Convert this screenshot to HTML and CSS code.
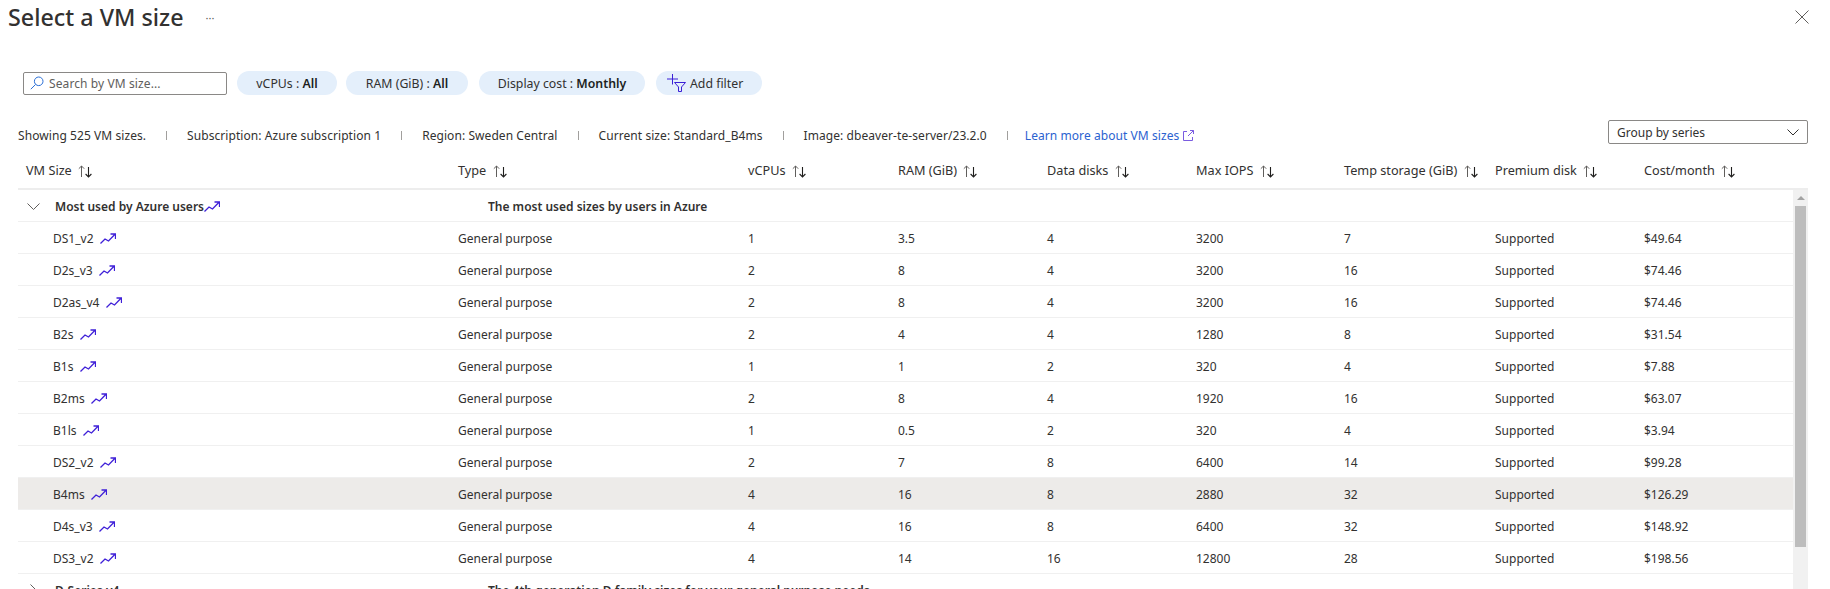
FILE: index.html
```html
<!DOCTYPE html>
<html lang="en">
<head>
    <meta charset="UTF-8">
    <title>Select a VM size</title>
    <link rel="stylesheet" href="styles.css">
</head>
<body>
    <svg class="defs" width="0" height="0">
        <symbol id="trend" viewBox="0 0 16 11">
            <path d="M0.5 10.5 L5 6 L8.5 8 L15 1.3 M10.5 1 H15.5 V6" fill="none" stroke="currentColor" stroke-width="1.3"/>
        </symbol>
        <symbol id="sort" viewBox="0 0 15 13">
            <path d="M3.5 12 V1 M0.8 3.7 L3.5 1 L6.2 3.7" fill="none" stroke="#605e5c" stroke-width="1"/>
            <path d="M10.5 2 V12 M7.6 9 L10.5 12 L13.4 9" fill="none" stroke="#201f1e" stroke-width="1.1"/>
        </symbol>
    </svg>

    <header class="title-bar">
        <h1>Select a VM size</h1>
        <span class="more">···</span>
        <svg class="close" width="14" height="14" viewBox="0 0 14 14"><path d="M0.5 0.5 L13.5 13.5 M13.5 0.5 L0.5 13.5" stroke="#605e5c" fill="none"/></svg>
    </header>

    <div class="toolbar">
        <div class="search">
            <svg width="14" height="14" viewBox="0 0 14 14"><circle cx="8.7" cy="5.3" r="4.3" fill="none" stroke="#2b6fd6"/><path d="M5.6 8.4 L0.8 13.2" stroke="#2b6fd6" fill="none"/></svg>
            <span>Search by VM size...</span>
        </div>
        <div class="pill pill-cpu"><span>vCPUs : <b>All</b></span></div>
        <div class="pill pill-ram"><span>RAM (GiB) : <b>All</b></span></div>
        <div class="pill pill-cost"><span>Display cost : <b>Monthly</b></span></div>
        <div class="pill pill-add">
            <svg width="19" height="18" viewBox="0 0 19 18"><path d="M0 5 H11 M5.5 0 V10.5" fill="none" stroke="#3a1fd6"/><path d="M7.5 8.5 H18.5 L14.5 13 V17.5 H11.5 V13 Z" fill="none" stroke="#3a1fd6"/></svg>
            <span>Add filter</span>
        </div>
    </div>

    <div class="info-row">
        <div class="info">
            <span>Showing 525 VM sizes.</span><i></i>
            <span>Subscription: Azure subscription 1</span><i></i>
            <span>Region: Sweden Central</span><i></i>
            <span>Current size: Standard_B4ms</span><i></i>
            <span>Image: dbeaver-te-server/23.2.0</span><i></i>
            <a href="#">Learn more about VM sizes
                <svg class="ext" width="11" height="11" viewBox="0 0 11 11"><path d="M4 1.5 H0.5 V10.5 H9.5 V7 M5 6 L10.5 0.5 M7 0.5 H10.5 V4" fill="none" stroke="#7a5ce0"/></svg>
            </a>
        </div>
        <div class="group-select">
            <span>Group by series</span>
            <svg width="12" height="7" viewBox="0 0 12 7"><path d="M0.5 0.5 L6 6 L11.5 0.5" fill="none" stroke="#323130"/></svg>
        </div>
    </div>

    <div class="row head">
        <div>VM Size <svg class="sort"><use href="#sort"/></svg></div>
        <div>Type <svg class="sort"><use href="#sort"/></svg></div>
        <div>vCPUs <svg class="sort"><use href="#sort"/></svg></div>
        <div>RAM (GiB) <svg class="sort"><use href="#sort"/></svg></div>
        <div>Data disks <svg class="sort"><use href="#sort"/></svg></div>
        <div>Max IOPS <svg class="sort"><use href="#sort"/></svg></div>
        <div>Temp storage (GiB) <svg class="sort"><use href="#sort"/></svg></div>
        <div>Premium disk <svg class="sort"><use href="#sort"/></svg></div>
        <div>Cost/month <svg class="sort"><use href="#sort"/></svg></div>
    </div>

    <div class="table-body">
        <div class="rows">
            <div class="group">
                <svg class="chev" width="13" height="13" viewBox="0 0 13 13"><path d="M0.5 3.5 L6.5 9.5 L12.5 3.5" fill="none" stroke="#605e5c"/></svg>
                <span class="group-name">Most used by Azure users<svg class="trend tight"><use href="#trend"/></svg></span>
                <span class="group-desc">The most used sizes by users in Azure</span>
            </div>

            <div class="row"><div class="vm">DS1_v2 <svg class="trend"><use href="#trend"/></svg></div><div>General purpose</div><div>1</div><div>3.5</div><div>4</div><div>3200</div><div>7</div><div>Supported</div><div>$49.64</div></div>
            <div class="row"><div class="vm">D2s_v3 <svg class="trend"><use href="#trend"/></svg></div><div>General purpose</div><div>2</div><div>8</div><div>4</div><div>3200</div><div>16</div><div>Supported</div><div>$74.46</div></div>
            <div class="row"><div class="vm">D2as_v4 <svg class="trend"><use href="#trend"/></svg></div><div>General purpose</div><div>2</div><div>8</div><div>4</div><div>3200</div><div>16</div><div>Supported</div><div>$74.46</div></div>
            <div class="row"><div class="vm">B2s <svg class="trend"><use href="#trend"/></svg></div><div>General purpose</div><div>2</div><div>4</div><div>4</div><div>1280</div><div>8</div><div>Supported</div><div>$31.54</div></div>
            <div class="row"><div class="vm">B1s <svg class="trend"><use href="#trend"/></svg></div><div>General purpose</div><div>1</div><div>1</div><div>2</div><div>320</div><div>4</div><div>Supported</div><div>$7.88</div></div>
            <div class="row"><div class="vm">B2ms <svg class="trend"><use href="#trend"/></svg></div><div>General purpose</div><div>2</div><div>8</div><div>4</div><div>1920</div><div>16</div><div>Supported</div><div>$63.07</div></div>
            <div class="row"><div class="vm">B1ls <svg class="trend"><use href="#trend"/></svg></div><div>General purpose</div><div>1</div><div>0.5</div><div>2</div><div>320</div><div>4</div><div>Supported</div><div>$3.94</div></div>
            <div class="row"><div class="vm">DS2_v2 <svg class="trend"><use href="#trend"/></svg></div><div>General purpose</div><div>2</div><div>7</div><div>8</div><div>6400</div><div>14</div><div>Supported</div><div>$99.28</div></div>
            <div class="row selected"><div class="vm">B4ms <svg class="trend"><use href="#trend"/></svg></div><div>General purpose</div><div>4</div><div>16</div><div>8</div><div>2880</div><div>32</div><div>Supported</div><div>$126.29</div></div>
            <div class="row"><div class="vm">D4s_v3 <svg class="trend"><use href="#trend"/></svg></div><div>General purpose</div><div>4</div><div>16</div><div>8</div><div>6400</div><div>32</div><div>Supported</div><div>$148.92</div></div>
            <div class="row"><div class="vm">DS3_v2 <svg class="trend"><use href="#trend"/></svg></div><div>General purpose</div><div>4</div><div>14</div><div>16</div><div>12800</div><div>28</div><div>Supported</div><div>$198.56</div></div>

            <div class="group">
                <svg class="chev" width="13" height="13" viewBox="0 0 13 13"><path d="M3.5 0.5 L9.5 6.5 L3.5 12.5" fill="none" stroke="#605e5c"/></svg>
                <span class="group-name">D-Series v4</span>
                <span class="group-desc">The 4th generation D family sizes for your general purpose needs</span>
            </div>
        </div>
        <div class="scrollbar">
            <div class="scroll-up"></div>
            <div class="scroll-thumb"></div>
        </div>
    </div>
</body>
</html>
```
FILE: styles.css
```css
html, body {
    height: 589px;
    overflow: hidden;
}
body {
    margin: 0;
    background-color: #fff;
    color: #323130;
    font-family: "Noto Sans", "Open Sans", sans-serif;
    font-size: 12px;
}
.defs {
    position: absolute;
}

/* Шапка */
.title-bar {
    display: flex;
    align-items: center;
    height: 34px;
    padding: 0 21px 0 8px;
}
.title-bar h1 {
    margin: 0;
    font-size: 23.3px;
    font-weight: 500;
}
.more {
    margin-left: 22px;
    font-size: 11px;
    color: #605e5c;
}
.close {
    margin-left: auto;
}

/* Фильтры */
.toolbar {
    display: flex;
    align-items: center;
    margin-top: 37px;
    padding-left: 23px;
    height: 24px;
}
.search {
    display: flex;
    align-items: center;
    gap: 5px;
    box-sizing: border-box;
    width: 204px;
    height: 23px;
    padding-left: 6px;
    margin-right: 10px;
    border: 1px solid #8a8886;
    border-radius: 2px;
    color: #605e5c;
    letter-spacing: 0.1px;
}
.pill {
    display: flex;
    align-items: center;
    justify-content: center;
    gap: 4px;
    height: 24px;
    background-color: #e4effb;
    border-radius: 12px;
    font-size: 12.3px;
}
.pill b {
    font-weight: 600;
    color: #201f1e;
}
.pill-cpu { width: 100px; margin-right: 9px; }
.pill-ram { width: 122px; margin-right: 11px; }
.pill-cost { width: 166px; margin-right: 11px; }
.pill-add {
    box-sizing: border-box;
    width: 106px;
    padding-left: 11px;
    justify-content: flex-start;
}

/* Строка с информацией */
.info-row {
    display: flex;
    align-items: center;
    justify-content: space-between;
    margin-top: 25px;
    padding: 0 22px 0 18px;
    height: 24px;
}
.info {
    display: flex;
    align-items: center;
    gap: 20px;
    margin-top: 6px;
    letter-spacing: 0.07px;
}
.info i {
    width: 1px;
    height: 9px;
    background-color: #a19f9d;
}
.info a {
    margin-left: -3px;
    color: #2b62d0;
    text-decoration: none;
}
.ext {
    vertical-align: -1px;
}
.group-select {
    display: flex;
    align-items: center;
    justify-content: space-between;
    box-sizing: border-box;
    width: 200px;
    height: 24px;
    padding: 0 8px;
    border: 1px solid #8a8886;
    border-radius: 2px;
}

/* Таблица */
.row {
    display: grid;
    grid-template-columns: 432px 290px 150px 149px 149px 148px 151px 149px 1fr;
    align-items: center;
    box-sizing: border-box;
    height: 32px;
    padding: 1px 0 0 8px;
    border-bottom: 1px solid #f0f0f0;
}
.head {
    height: 38px;
    margin: 8px 22px 0 18px;
    padding-top: 0;
    font-size: 12.7px;
    border-bottom: 2px solid #ededed;
}
.sort {
    width: 15px;
    height: 13px;
    margin-left: 3px;
    vertical-align: -3px;
}
.table-body {
    display: flex;
    margin: 0 22px 0 18px;
}
.rows {
    flex: 1;
}
.vm {
    padding-left: 27px;
}
.selected {
    background-color: #edebe9;
}
.trend {
    width: 16px;
    height: 11px;
    margin-left: 3px;
    vertical-align: -1px;
    color: #3f20d8;
}
.trend.tight {
    margin-left: 0;
}
.group {
    display: flex;
    align-items: center;
    box-sizing: border-box;
    height: 32px;
    padding-top: 1px;
    border-bottom: 1px solid #f0f0f0;
    font-weight: 600;
}
.chev {
    margin-left: 9px;
}
.group-name {
    width: 433px;
    margin-left: 15px;
}
.group-desc {
    white-space: nowrap;
}
.scrollbar {
    width: 15px;
    height: 400px;
    background-color: #f1f1f1;
    display: flex;
    flex-direction: column;
    align-items: center;
}
.scroll-up {
    width: 0;
    height: 0;
    margin-top: 6px;
    border-left: 4px solid transparent;
    border-right: 4px solid transparent;
    border-bottom: 4px solid #a3a3a3;
}
.scroll-thumb {
    width: 11px;
    height: 341px;
    margin-top: 6px;
    background-color: #bdbdbd;
}
```
